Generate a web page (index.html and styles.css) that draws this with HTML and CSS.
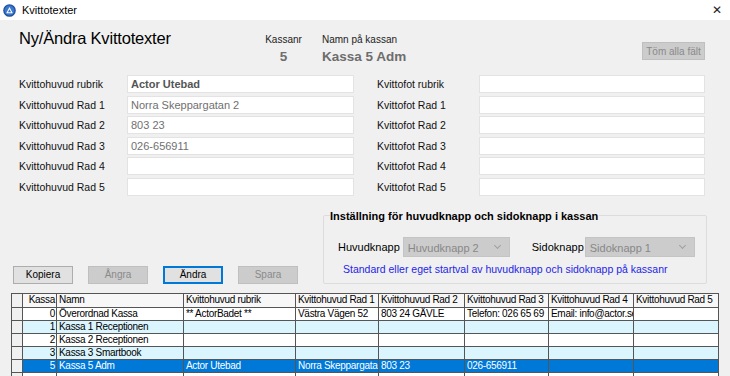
FILE: index.html
```html
<!DOCTYPE html>
<html lang="sv">
<head>
    <meta charset="UTF-8">
    <title>Kvittotexter</title>
    <link rel="stylesheet" href="styles.css">
</head>
<body>
    <div class="titlebar">
        <svg class="app-icon" width="13" height="13" viewBox="0 0 13 13">
            <circle cx="6.5" cy="6.5" r="6.3" fill="#1f4e9c"/>
            <circle cx="6.5" cy="6.5" r="5" fill="#3a78d0"/>
            <path d="M6.5 3 L9.8 9.2 L3.2 9.2 Z" fill="#fff"/>
            <path d="M6.5 5.3 L8.1 8.2 L4.9 8.2 Z" fill="#3a78d0"/>
        </svg>
        <span class="title">Kvittotexter</span>
        <span class="close">&#x2715;</span>
    </div>

    <div class="window">
        <div class="header">
            <h1>Ny/Ändra Kvittotexter</h1>
            <div class="info kassanr">
                <span class="info-label">Kassanr</span>
                <span class="info-value">5</span>
            </div>
            <div class="info">
                <span class="info-label">Namn på kassan</span>
                <span class="info-value">Kassa 5 Adm</span>
            </div>
            <button class="btn btn-clear" disabled>Töm alla fält</button>
        </div>

        <div class="fields">
            <div class="field-col left">
                <label>Kvittohuvud rubrik</label><input class="bold" type="text" value="Actor Utebad">
                <label>Kvittohuvud Rad 1</label><input type="text" value="Norra Skeppargatan 2">
                <label>Kvittohuvud Rad 2</label><input type="text" value="803 23">
                <label>Kvittohuvud Rad 3</label><input type="text" value="026-656911">
                <label>Kvittohuvud Rad 4</label><input type="text" value="">
                <label>Kvittohuvud Rad 5</label><input type="text" value="">
            </div>
            <div class="field-col right">
                <label>Kvittofot rubrik</label><input type="text" value="">
                <label>Kvittofot Rad 1</label><input type="text" value="">
                <label>Kvittofot Rad 2</label><input type="text" value="">
                <label>Kvittofot Rad 3</label><input type="text" value="">
                <label>Kvittofot Rad 4</label><input type="text" value="">
                <label>Kvittofot Rad 5</label><input type="text" value="">
            </div>
        </div>

        <div class="middle">
            <div class="actions">
                <button class="btn">Kopiera</button>
                <button class="btn" disabled>Ångra</button>
                <button class="btn btn-focus">Ändra</button>
                <button class="btn" disabled>Spara</button>
            </div>
            <fieldset class="groupbox">
                <legend>Inställning för huvudknapp och sidoknapp i kassan</legend>
                <div class="combo-row">
                    <span class="combo-label">Huvudknapp</span>
                    <div class="combo main">Huvudknapp 2<span class="chev"></span></div>
                    <span class="combo-label side">Sidoknapp</span>
                    <div class="combo sidecombo">Sidoknapp 1<span class="chev"></span></div>
                </div>
                <p class="hint">Standard eller eget startval av huvudknapp och sidoknapp på kassanr</p>
            </fieldset>
        </div>

        <table class="grid">
            <colgroup>
                <col style="width:11px"><col style="width:34px"><col style="width:127px"><col style="width:112px">
                <col style="width:83px"><col style="width:86px"><col style="width:84px"><col style="width:85px"><col style="width:85px">
            </colgroup>
            <thead>
                <tr>
                    <th class="sel"></th><th class="num">Kassa</th><th>Namn</th><th>Kvittohuvud rubrik</th>
                    <th>Kvittohuvud Rad 1</th><th>Kvittohuvud Rad 2</th><th>Kvittohuvud Rad 3</th><th>Kvittohuvud Rad 4</th><th>Kvittohuvud Rad 5</th>
                </tr>
            </thead>
            <tbody>
                <tr>
                    <td class="sel"></td><td class="num">0</td><td>Överordnad Kassa</td><td>** ActorBadet **</td>
                    <td>Västra Vägen 52</td><td>803 24 GÄVLE</td><td>Telefon: 026 65 69</td><td>Email: info@actor.se</td><td></td>
                </tr>
                <tr class="alt">
                    <td class="sel"></td><td class="num">1</td><td>Kassa 1 Receptionen</td><td></td><td></td><td></td><td></td><td></td><td></td>
                </tr>
                <tr>
                    <td class="sel"></td><td class="num">2</td><td>Kassa 2 Receptionen</td><td></td><td></td><td></td><td></td><td></td><td></td>
                </tr>
                <tr class="alt">
                    <td class="sel"></td><td class="num">3</td><td>Kassa 3 Smartbook</td><td></td><td></td><td></td><td></td><td></td><td></td>
                </tr>
                <tr class="selected">
                    <td class="sel"></td><td class="num">5</td><td>Kassa 5 Adm</td><td>Actor Utebad</td>
                    <td>Norra Skeppargatan 2</td><td>803 23</td><td>026-656911</td><td></td><td></td>
                </tr>
                <tr>
                    <td class="sel"></td><td class="num"></td><td></td><td></td><td></td><td></td><td></td><td></td><td></td>
                </tr>
            </tbody>
        </table>
    </div>
</body>
</html>
```

FILE: styles.css
```css
/* General Styling */
body {
    margin: 0;
    width: 730px;
    height: 376px;
    overflow: hidden;
    font-family: 'Liberation Sans', Arial, sans-serif;
    font-size: 11px;
    color: #000;
    background: #f0f0f0;
}

.titlebar {
    height: 20px;
    background: #fff;
    display: flex;
    align-items: center;
    padding: 0 0 0 3px;
}

.app-icon {
    margin-right: 6px;
}

.title {
    font-size: 11px;
    flex: 1;
}

.close {
    width: 26px;
    font-size: 12px;
    text-align: center;
    color: #222;
}

.window {
    padding: 0 0 0 11px;
}

/* Header */
.header {
    display: flex;
    align-items: flex-start;
    height: 55px;
}

h1 {
    font-size: 16.5px;
    font-weight: normal;
    margin: 9px 0 0 8px;
    width: 247px;
    letter-spacing: -0.2px;
}

.info {
    display: flex;
    flex-direction: column;
    margin-top: 14px;
    font-size: 10px;
    color: #222;
}

.kassanr {
    align-items: center;
    width: 35px;
    margin-right: 21px;
}

.info-value {
    font-size: 13.5px;
    font-weight: bold;
    color: #6d6d6d;
    margin-top: 4px;
}

.btn {
    font-family: inherit;
    font-size: 10px;
    height: 18px;
    padding: 0;
    background: #e1e1e1;
    border: 1px solid #adadad;
    color: #000;
}

.btn:disabled {
    background: #cccccc;
    border-color: #bfbfbf;
    color: #8a8a8a;
}

.btn-clear {
    width: 63px;
    margin: 22px 25px 0 auto;
}

/* Fields */
.fields {
    display: flex;
}

.field-col {
    display: grid;
    row-gap: 2.6px;
    align-items: center;
}

.field-col.left {
    grid-template-columns: 108px 227px;
    margin-left: 8px;
}

.field-col.right {
    grid-template-columns: 102px 226px;
    margin-left: 23px;
}

.field-col label {
    font-size: 10.5px;
    color: #111;
}

.field-col input {
    height: 18px;
    box-sizing: border-box;
    border: 1px solid #e3e3e3;
    background: #fff;
    font-family: inherit;
    font-size: 11px;
    color: #707070;
    padding: 0 3px;
}

.field-col input.bold {
    font-weight: bold;
    color: #555;
}

/* Buttons and groupbox */
.middle {
    display: flex;
    align-items: flex-end;
    margin-top: 14px;
}

.actions {
    display: flex;
    gap: 15px;
    margin: 0 0 0 2px;
    width: 310px;
}

.actions .btn {
    width: 60px;
}

.btn-focus {
    border: 1px solid #0078d7;
    box-shadow: inset 0 0 0 1px #0078d7;
}

.groupbox {
    margin: 0;
    padding: 0 0 4px 14px;
    width: 384px;
    height: 74px;
    box-sizing: border-box;
    border: 1px solid #dcdcdc;
    border-radius: 2px;
}

.groupbox legend {
    font-weight: bold;
    font-size: 11px;
    padding: 0 1px 0 0;
    margin-left: -8px;
}

.combo-row {
    display: flex;
    align-items: center;
    margin-top: 15px;
}

.combo-label {
    font-size: 11px;
    margin-right: 3px;
}

.combo-label.side {
    margin-left: 22px;
    margin-right: 1px;
}

.combo {
    position: relative;
    height: 20px;
    line-height: 20px;
    box-sizing: border-box;
    background: #cccccc;
    border: 1px solid #c4c4c4;
    color: #888;
    font-size: 11px;
    padding-left: 4px;
}

.combo.main {
    width: 107px;
}

.combo.sidecombo {
    width: 110px;
}

.chev {
    position: absolute;
    right: 9px;
    top: 5px;
    width: 4px;
    height: 4px;
    border-right: 1px solid #a0a0a0;
    border-bottom: 1px solid #a0a0a0;
    transform: rotate(45deg);
}

.hint {
    margin: 6px 0 0 5px;
    font-size: 10.5px;
    color: #2424e8;
}

/* Grid */
.grid {
    margin-top: 9px;
    border-collapse: collapse;
    table-layout: fixed;
    width: 707px;
    font-size: 10px;
    letter-spacing: -0.3px;
}

.grid th,
.grid td {
    border: 1px solid #555;
    height: 12px;
    padding: 0 1px 0 2px;
    white-space: nowrap;
    overflow: hidden;
    text-overflow: clip;
    text-align: left;
    font-weight: normal;
    line-height: 12px;
    background: #fff;
}

.grid th {
    height: 13px;
    background: #f7f7f7;
}

.grid .num {
    text-align: right;
}

.grid tr.alt td {
    background: #daf5fe;
}

.grid tr.selected td {
    background: #0078d7;
    color: #fff;
}

.grid tr td.sel,
.grid tr.alt td.sel,
.grid tr.selected td.sel,
.grid th.sel {
    background: #f0f0f0;
}
```
